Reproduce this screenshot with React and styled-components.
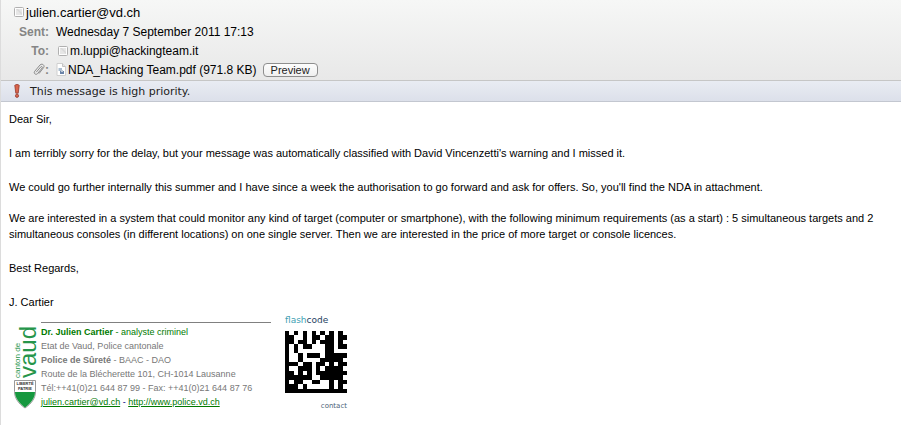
import React from "react";
import styled, { createGlobalStyle } from "styled-components";

const GlobalStyle = createGlobalStyle`
  * {
    box-sizing: border-box;
  }

  body {
    margin: 0;
    background: #fff;
    color: #000;
    font-family: "Liberation Sans", Arial, Helvetica, sans-serif;
    font-size: 11px;
  }
`;

const Message = styled.main`
  min-height: 100vh;
  border-left: 1px solid #dcdcdc;
`;

const Header = styled.header`
  padding: 4px 0 1px 13px;
  background: linear-gradient(#f6f7f6, #e8e8e8);
  border-bottom: 1px solid #c6c6c6;
`;

const Sender = styled.div`
  display: flex;
  align-items: center;
  gap: 2px;
  height: 16px;
  margin-bottom: 2px;
  font-size: 13px;
`;

const Field = styled.div`
  display: flex;
  align-items: center;
  height: 19px;
  font-size: 12px;
`;

const FieldLabel = styled.span`
  display: flex;
  align-items: center;
  justify-content: flex-end;
  width: 35px;
  margin-right: 7px;
  color: #858585;
  font-weight: 700;
`;

const FieldValue = styled.span`
  display: flex;
  align-items: center;
  gap: 2px;
  padding-left: ${({ $indent }) => $indent || 0}px;
`;

const PreviewButton = styled.button`
  height: 14px;
  margin-left: 6px;
  padding: 0 7px;
  border: 1px solid #8e8e8e;
  border-radius: 4px;
  background: linear-gradient(#fdfdfd, #efefef);
  color: #222;
  font-family: inherit;
  font-size: 11px;
  line-height: 12px;
`;

const Priority = styled.div`
  display: flex;
  align-items: center;
  gap: 10px;
  height: 21px;
  padding-left: 13px;
  background: linear-gradient(#e9ecf3, #dce0ea);
  border-bottom: 1px solid #c3c7d0;
  color: #222;
  font-family: "DejaVu Sans", sans-serif;
  font-size: 11px;
`;

const Body = styled.article`
  padding: 9px 8px 0;
`;

const Paragraph = styled.p`
  margin: 0 0 ${({ $gap }) => $gap || 18}px;
  line-height: 16px;
`;

const Signature = styled.footer`
  display: flex;
  align-items: flex-start;
`;

const Contact = styled.address`
  width: 230px;
  margin: 8px 14px 0 2px;
  padding-top: 2px;
  border-top: 1px solid #808080;
  color: #777;
  font-size: 9px;
  font-style: normal;
  line-height: 14px;
  white-space: nowrap;
`;

const Name = styled.div`
  color: #007a00;
`;

const ContactLink = styled.a`
  color: #007a00;
`;

const Links = styled.div`
  color: #000080;
`;

const CodePanel = styled.div`
  display: flex;
  flex-direction: column;
  width: 62px;
`;

const CodeTitle = styled.div`
  height: 17px;
  color: #24425f;
  font-family: "DejaVu Sans", sans-serif;
  font-size: 9px;
  line-height: 12px;
`;

const Flash = styled.span`
  color: #3f9fb4;
`;

const CodeCaption = styled.div`
  margin-top: 7px;
  color: #4b5f78;
  font-family: "DejaVu Sans", sans-serif;
  font-size: 7px;
  line-height: 12px;
  text-align: right;
`;

const Logo = styled.svg`
  flex: none;
  overflow: visible;
`;

const MODULES = [
  "10101010101010",
  "11001011011011",
  "11011010111010",
  "10101100011011",
  "10100000011000",
  "10010111011111",
  "10010000111110",
  "11101101101011",
  "10011101011110",
  "11010101111111",
  "11111100111110",
  "10110011001011",
  "11101000001010",
  "11111111111111",
];

const AddressIcon = () => (
  <svg width="10" height="10" viewBox="0 0 10 10" aria-hidden="true">
    <rect x="0.5" y="0.5" width="9" height="9" rx="1" fill="#fdfdfd" stroke="#b0b0b0" />
    <path d="M2 2h6v6H2z" fill="#e6e6e6" />
    <path d="M2 2h2l4 4v2z" fill="#d8d8d8" />
  </svg>
);

const ClipIcon = () => (
  <svg width="12" height="13" viewBox="0 0 12 13" fill="none" stroke="#808080" strokeWidth="0.9" aria-hidden="true">
    <path d="M3.200 9.200 7.800 3.900c.9-1 2.100.1 1.300 1.100L4.600 10.600c-1.600 1.800-4.500-.2-2.900-2.300L7 2c1.900-2.100 5.300.3 3.600 2.600L6 10.600" />
  </svg>
);

const PdfIcon = () => (
  <svg width="10" height="13" viewBox="0 0 10 13" aria-hidden="true">
    <path d="M1 .5h5.500l3 3v9H1z" fill="#fff" stroke="#cfcfcf" />
    <path d="M6.500.5v3h3" fill="#e4e4e4" stroke="#c4c4c4" />
    <path d="M2.500 5h3.500v3h-3.500z" fill="#a9bccf" />
    <path d="M4 8h4v3H4z" fill="#6a83a8" />
    <path d="M5 7h2v2H5z" fill="#bdc9d5" />
  </svg>
);

const PriorityIcon = () => (
  <svg width="6" height="14" viewBox="0 0 6 14" fill="#d9654c" stroke="#93382d" strokeWidth="0.8" aria-hidden="true">
    <path d="M.8 1.500C.8.200 5.200.200 5.200 1.500L4.200 9.200H1.800z" />
    <circle cx="3" cy="11.800" r="1.600" />
  </svg>
);

const VaudLogo = () => (
  <Logo width="30" height="96" viewBox="0 0 30 96" role="img" aria-label="canton de vaud">
    <g fill="#26954a" fontFamily="Liberation Sans, sans-serif">
      <text transform="translate(11 64) rotate(-90)" fontSize="8">canton de</text>
      <text transform="translate(27 64) rotate(-90)" fontSize="24">vaud</text>
    </g>
    <path d="M5.500 66.500h21v11c0 7-4.500 12.500-10.500 16.500C10 90 5.500 84.500 5.500 77.500z" fill="#fff" stroke="#999" />
    <path d="M6 78h20c0 6-4.500 11.500-10 15.500C10.500 89.500 6 84 6 78z" fill="#16983f" />
    <g fill="#333" fontFamily="Liberation Sans, sans-serif" fontSize="4" fontWeight="700" textAnchor="middle">
      <text x="16" y="71">LIBERTÉ</text>
      <text x="16" y="76">PATRIE</text>
    </g>
  </Logo>
);

const DataMatrix = () => (
  <svg width="62" height="62" viewBox="0 0 14 14" shapeRendering="crispEdges" role="img" aria-label="flashcode">
    {MODULES.map((row, y) =>
      [...row].map((cell, x) => cell === "1" && <rect key={`${x}-${y}`} x={x} y={y} width="1" height="1" />)
    )}
  </svg>
);

const App = () => (
  <>
    <GlobalStyle />
    <Message>
      <Header>
        <Sender>
          <AddressIcon />
          julien.cartier@vd.ch
        </Sender>
        <Field>
          <FieldLabel>Sent:</FieldLabel>
          <FieldValue>Wednesday 7 September 2011 17:13</FieldValue>
        </Field>
        <Field>
          <FieldLabel>To:</FieldLabel>
          <FieldValue $indent={2}>
            <AddressIcon />
            m.luppi@hackingteam.it
          </FieldValue>
        </Field>
        <Field>
          <FieldLabel>
            <ClipIcon />:
          </FieldLabel>
          <FieldValue>
            <PdfIcon />
            NDA_Hacking Team.pdf (971.8 KB)
          </FieldValue>
          <PreviewButton type="button">Preview</PreviewButton>
        </Field>
      </Header>
      <Priority>
        <PriorityIcon />
        This message is high priority.
      </Priority>
      <Body>
        <Paragraph>Dear Sir,</Paragraph>
        <Paragraph>
          I am terribly sorry for the delay, but your message was automatically classified with David Vincenzetti's
          warning and I missed it.
        </Paragraph>
        <Paragraph $gap={15}>
          We could go further internally this summer and I have since a week the authorisation to go forward and ask
          for offers. So, you'll find the NDA in attachment.
        </Paragraph>
        <Paragraph>
          We are interested in a system that could monitor any kind of target (computer or smartphone), with the
          following minimum requirements (as a start) : 5 simultaneous targets and 2 simultaneous consoles (in
          different locations) on one single server. Then we are interested in the price of more target or console
          licences.
        </Paragraph>
        <Paragraph>Best Regards,</Paragraph>
        <Paragraph $gap={4}>J. Cartier</Paragraph>
        <Signature>
          <VaudLogo />
          <Contact>
            <Name>
              <b>Dr. Julien Cartier</b> - analyste criminel
            </Name>
            <div>Etat de Vaud, Police cantonale</div>
            <div>
              <b>Police de Sûreté</b> - BAAC - DAO
            </div>
            <div>Route de la Blécherette 101, CH-1014 Lausanne</div>
            <div>Tél:++41(0)21 644 87 99 - Fax: ++41(0)21 644 87 76</div>
            <Links>
              <ContactLink href="mailto:julien.cartier@vd.ch">julien.cartier@vd.ch</ContactLink>
              {" - "}
              <ContactLink href="http://www.police.vd.ch">http://www.police.vd.ch</ContactLink>
            </Links>
          </Contact>
          <CodePanel>
            <CodeTitle>
              <Flash>flash</Flash>code
            </CodeTitle>
            <DataMatrix />
            <CodeCaption>contact</CodeCaption>
          </CodePanel>
        </Signature>
      </Body>
    </Message>
  </>
);

export default App;
